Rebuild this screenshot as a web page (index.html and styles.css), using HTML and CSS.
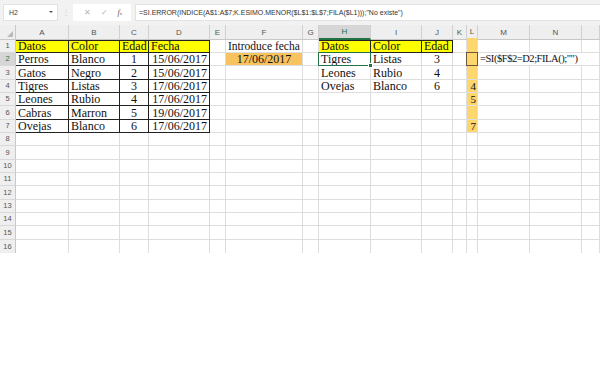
FILE: index.html
```html
<!DOCTYPE html>
<html lang="es">
<head>
<meta charset="utf-8">
<title>Excel</title>
<link rel="stylesheet" href="styles.css">
</head>
<body>
<div class="app">
  <div class="fbar">
    <div class="namebox"><span class="nb-text">H2</span><span class="caret"></span></div>
    <div class="sep">⋮</div>
    <div class="btns">
      <span class="btn x">✕</span>
      <span class="btn ok">✓</span>
      <span class="btn fx"><i>f</i><sub>x</sub></span>
    </div>
    <div class="formula">=SI.ERROR(INDICE(A$1:A$7;K.ESIMO.MENOR($L$1:$L$7;FILA($L1)));"No existe")</div>
  </div>
  <table class="sheet">
    <colgroup>
      <col class="w-rh"><col class="w-a"><col class="w-b"><col class="w-c"><col class="w-d"><col class="w-e"><col class="w-f"><col class="w-g"><col class="w-h"><col class="w-i"><col class="w-j"><col class="w-k"><col class="w-l"><col class="w-m"><col class="w-n"><col class="w-o">
    </colgroup>
    <tr class="hdr">
      <th class="corner"><span class="tri"></span></th><th>A</th><th>B</th><th>C</th><th>D</th><th>E</th><th>F</th><th>G</th><th class="sel">H</th><th>I</th><th>J</th><th>K</th><th class="lh">L</th><th>M</th><th>N</th><th></th>
    </tr>
    <tr class="r13">
      <th>1</th><td class="y bx">Datos</td><td class="y bx">Color</td><td class="y bx">Edad</td><td class="y bx">Fecha</td><td></td><td class="intro">Introduce fecha</td><td></td><td class="y bx">Datos</td><td class="y bx">Color</td><td class="y bx">Edad</td><td></td><td class="or"></td><td></td><td></td><td></td>
    </tr>
    <tr class="r13">
      <th class="rsel">2</th><td class="bx">Perros</td><td class="bx">Blanco</td><td class="bx ctr">1</td><td class="bx rt">15/06/2017</td><td></td><td class="of ctr">17/06/2017</td><td></td><td class="act">Tigres<span class="selbox"></span><span class="handle"></span></td><td>Listas</td><td class="ctr">3</td><td></td><td class="or dk"><span class="dkbox"></span></td><td class="ovf" colspan="3">=SI($F$2=D2;FILA();"")</td>
    </tr>
    <tr class="r14">
      <th>3</th><td class="bx">Gatos</td><td class="bx">Negro</td><td class="bx ctr">2</td><td class="bx rt">15/06/2017</td><td></td><td></td><td></td><td>Leones</td><td>Rubio</td><td class="ctr">4</td><td></td><td class="or"></td><td></td><td></td><td></td>
    </tr>
    <tr class="r13">
      <th>4</th><td class="bx">Tigres</td><td class="bx">Listas</td><td class="bx ctr">3</td><td class="bx rt">17/06/2017</td><td></td><td></td><td></td><td>Ovejas</td><td>Blanco</td><td class="ctr">6</td><td></td><td class="or num">4</td><td></td><td></td><td></td>
    </tr>
    <tr class="r13">
      <th>5</th><td class="bx">Leones</td><td class="bx">Rubio</td><td class="bx ctr">4</td><td class="bx rt">17/06/2017</td><td></td><td></td><td></td><td></td><td></td><td></td><td></td><td class="or num">5</td><td></td><td></td><td></td>
    </tr>
    <tr class="r14">
      <th>6</th><td class="bx">Cabras</td><td class="bx">Marron</td><td class="bx ctr">5</td><td class="bx rt">19/06/2017</td><td></td><td></td><td></td><td></td><td></td><td></td><td></td><td class="or"></td><td></td><td></td><td></td>
    </tr>
    <tr class="r13">
      <th>7</th><td class="bx">Ovejas</td><td class="bx">Blanco</td><td class="bx ctr">6</td><td class="bx rt">17/06/2017</td><td></td><td></td><td></td><td></td><td></td><td></td><td></td><td class="or num">7</td><td></td><td></td><td></td>
    </tr>
    <tr class="r13"><th>8</th><td></td><td></td><td></td><td></td><td></td><td></td><td></td><td></td><td></td><td></td><td></td><td></td><td></td><td></td><td></td></tr>
    <tr class="r14"><th>9</th><td></td><td></td><td></td><td></td><td></td><td></td><td></td><td></td><td></td><td></td><td></td><td></td><td></td><td></td><td></td></tr>
    <tr class="r13"><th>10</th><td></td><td></td><td></td><td></td><td></td><td></td><td></td><td></td><td></td><td></td><td></td><td></td><td></td><td></td><td></td></tr>
    <tr class="r13"><th>11</th><td></td><td></td><td></td><td></td><td></td><td></td><td></td><td></td><td></td><td></td><td></td><td></td><td></td><td></td><td></td></tr>
    <tr class="r14"><th>12</th><td></td><td></td><td></td><td></td><td></td><td></td><td></td><td></td><td></td><td></td><td></td><td></td><td></td><td></td><td></td></tr>
    <tr class="r13"><th>13</th><td></td><td></td><td></td><td></td><td></td><td></td><td></td><td></td><td></td><td></td><td></td><td></td><td></td><td></td><td></td></tr>
    <tr class="r13"><th>14</th><td></td><td></td><td></td><td></td><td></td><td></td><td></td><td></td><td></td><td></td><td></td><td></td><td></td><td></td><td></td></tr>
    <tr class="r14"><th>15</th><td></td><td></td><td></td><td></td><td></td><td></td><td></td><td></td><td></td><td></td><td></td><td></td><td></td><td></td><td></td></tr>
    <tr class="r13 last"><th>16</th><td></td><td></td><td></td><td></td><td></td><td></td><td></td><td></td><td></td><td></td><td></td><td></td><td></td><td></td><td></td></tr>
  </table>
</div>
</body>
</html>
```

FILE: styles.css
```css
* { box-sizing: border-box; }
html, body { margin: 0; padding: 0; background: #ffffff; }
.app { width: 600px; height: 388px; background: #ffffff; overflow: hidden; }

.fbar {
  height: 25px;
  background: #f2f2f2;
  display: flex;
  align-items: center;
  padding: 3px 0 4px 3px;
  font-family: "Liberation Sans", Arial, sans-serif;
  color: #444;
}
.namebox {
  width: 55px; height: 17px;
  background: #fff;
  border: 1px solid #e2e2e2;
  display: flex; align-items: center; justify-content: space-between;
  padding: 0 4px 0 5px;
  font-size: 7px;
}
.caret {
  width: 0; height: 0;
  border-left: 2px solid transparent;
  border-right: 2px solid transparent;
  border-top: 2px solid #555;
}
.sep { width: 15px; text-align: center; font-size: 8px; color: #c8c8c8; }
.btns {
  width: 58px; height: 17px;
  background: #fff;
  display: flex; align-items: center; justify-content: space-around;
  padding: 0 4px 0 6px;
  font-size: 8px;
}
.btn { color: #b5b5b5; }
.btn.fx { color: #555; font-family: "Liberation Serif", serif; font-size: 8px; }
.btn.fx sub { font-size: 5px; vertical-align: baseline; }
.formula {
  flex: 1;
  margin-left: 4px;
  height: 17px;
  background: #fff;
  border: 1px solid #e2e2e2;
  border-right: none;
  font-size: 7px;
  line-height: 15px;
  padding-left: 3px;
  color: #333;
  white-space: nowrap;
}

.sheet {
  table-layout: fixed;
  border-collapse: separate;
  border-spacing: 0;
  width: 600px;
  font-family: "Liberation Serif", "Times New Roman", serif;
  font-size: 12px;
  color: #111;
}
.w-rh { width: 16px; } .w-a { width: 53px; } .w-b { width: 51px; } .w-c { width: 29px; }
.w-d { width: 61px; } .w-e { width: 16px; } .w-f { width: 77px; } .w-g { width: 16px; }
.w-h { width: 52px; } .w-i { width: 51px; } .w-j { width: 31px; } .w-k { width: 14px; }
.w-l { width: 11px; } .w-m { width: 52px; } .w-n { width: 52px; } .w-o { width: 18px; }

.sheet td, .sheet th {
  padding: 0;
  border-right: 1px solid #dedede;
  border-bottom: 1px solid #dedede;
  white-space: nowrap;
  overflow: hidden;
  line-height: 12px;
  vertical-align: bottom;
}
.sheet td { padding: 0 2px; text-align: left; }

.hdr { height: 14px; }
.hdr th {
  background: #efefef;
  font-family: "Liberation Sans", Arial, sans-serif;
  font-size: 8px;
  font-weight: normal;
  color: #555;
  border-right: 1px solid #d0d0d0;
  border-bottom: 1px solid #c8c8c8;
  vertical-align: middle;
  line-height: 13px;
}
.hdr th.sel { background: #d6d6d6; border-bottom: 2px solid #217346; color: #217346; }
.hdr th.lh { border-bottom: 2px solid #fdd66e; }
.corner { position: relative; }
.tri {
  position: absolute; right: 2px; bottom: 2px;
  width: 0; height: 0;
  border-left: 6px solid transparent;
  border-bottom: 6px solid #b9b9b9;
}
.r13 { height: 13px; }
.r14 { height: 14px; }
.sheet tr > th:first-child {
  background: #efefef;
  font-family: "Liberation Sans", Arial, sans-serif;
  font-size: 7.5px;
  font-weight: normal;
  color: #555;
  border-right: 1px solid #c8c8c8;
  border-bottom: 1px solid #d8d8d8;
  text-align: center;
  vertical-align: middle;
  line-height: 12px;
}
.sheet tr > th.rsel { background: #d6d6d6; color: #217346; }
.sheet tr.hdr > th:first-child { background: #efefef; border-bottom: 1px solid #c8c8c8; }

.y { background: #ffff00; }
.bx { border-right: 1px solid #222 !important; border-bottom: 1px solid #222 !important; }
.sheet tr:nth-child(2) .bx { box-shadow: inset 0 1px 0 #222; }
.ctr { text-align: center !important; }
.rt { text-align: right !important; }
.intro { font-size: 11.5px; padding-left: 2px !important; overflow: visible !important; }
.of { background: #f8c35e; }
.or { background: #fdd66e; padding: 0 !important; }
.num { text-align: right !important; padding-right: 1px !important; font-size: 11px; }
.dk { position: relative; overflow: visible !important; }
.dkbox {
  position: absolute; left: -1px; top: -1px; right: -1px; bottom: -1px;
  border: 1px solid #6b5a3a;
}
.act { position: relative; overflow: visible !important; }
.selbox {
  position: absolute; left: -1px; top: -1px; right: -1px; bottom: -1px;
  border: 1px solid #217346;
}
.handle {
  position: absolute; right: -3px; bottom: -3px;
  width: 5px; height: 5px;
  background: #217346;
  border: 1px solid #fff;
}
.ovf { font-size: 10.5px; letter-spacing: -0.45px; padding-left: 2px !important; }
.last td, .last th { border-bottom: none !important; }
```
